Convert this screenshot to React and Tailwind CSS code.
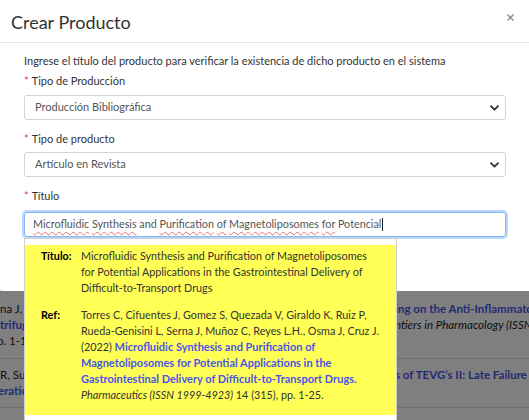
import React from 'react';

const Caret = () => (
  <svg width="9" height="6" viewBox="0 0 9 6" fill="none">
    <path d="M1 1.2 L4.5 4.7 L8 1.2" stroke="#333" strokeWidth="1.8" strokeLinecap="round" strokeLinejoin="round" />
  </svg>
);

const Label = ({ children, className = '' }) => (
  <div className={`leading-4 text-[#333] ${className}`}>
    <span className="mr-[3px] text-[#e04040]">*</span>
    {children}
  </div>
);

const Select = ({ value, className = '' }) => (
  <div className={`flex h-[25px] items-center justify-between rounded-[3px] border border-[#ced4da] pl-[10px] pr-[6px] text-[#555] ${className}`}>
    <span>{value}</span>
    <Caret />
  </div>
);

const Typo = ({ children }) => (
  <span className="underline decoration-[#e87070] decoration-wavy decoration-1 underline-offset-[3px]">{children}</span>
);

const BgLine = ({ left, right }) => (
  <div className="flex h-4 items-center whitespace-nowrap leading-4">
    <span className="w-[395px] shrink-0 overflow-hidden">{left}</span>
    <span>{right}</span>
  </div>
);

export default function App() {
  return (
    <div className="relative h-[420px] w-[529px] overflow-hidden bg-white font-['Lato',sans-serif] text-[11px]">
      {/* page behind the modal */}
      <div className="pt-[301px] text-[11.5px] text-[#222]">
        <div className="border-b border-[#dcdcdc] pb-[9px]">
          <BgLine left={<span>na J, Espinosa M, Rodríguez J</span>} right={<b className="text-[#4a55e8]">ing on the Anti-Inflammatory Effects of</b>} />
          <BgLine left={<b className="text-[#4a55e8]">trifugation and purification</b>} right={<i>ntiers in Pharmacology (ISSN 1663-9812)</i>} />
          <BgLine left={<span className="ml-[-3px]">p. 1-16.</span>} />
        </div>
        <div className="border-b border-[#dcdcdc] pb-[8px] pt-[8px]">
          <BgLine left={<span>R, Suárez C, Briceño J</span>} right={<b className="text-[#4a55e8]">s of TEVG’s II: Late Failure and</b>} />
          <BgLine left={<b className="ml-[-2px] text-[#4a55e8]">eration of vascular</b>} />
        </div>
      </div>
      <div className="absolute inset-0 bg-black/50" />

      {/* modal */}
      <div className="absolute left-[-3px] top-[-6px] h-[297px] w-[545px] rounded-[5px] bg-white">
        <div className="flex h-[49px] items-center justify-between border-b border-[#e5e5e5] px-[14px]">
          <h4 className="mt-[7px] text-[18px] leading-6 text-[#333]">Crear Producto</h4>
          <button className="mb-[2px] mr-[13px] flex h-[10px] w-[10px] items-center justify-center">
            <svg width="7" height="7" viewBox="0 0 7 7">
              <path d="M0.5 0.5 L6.5 6.5 M6.5 0.5 L0.5 6.5" stroke="#8a8a8a" strokeWidth="1.4" />
            </svg>
          </button>
        </div>

        <div className="px-[27px] pt-[10px]">
          <p className="leading-4 text-[#333]">
            Ingrese el título del producto para verificar la existencia de dicho producto en el sistema
          </p>
          <Label className="mt-[4px]">Tipo de Producción</Label>
          <Select className="mt-[6px] w-[482px]" value="Producción Bibliográfica" />
          <Label className="mt-[11px]">Tipo de producto</Label>
          <Select className="mt-[5px] w-[482px]" value="Artículo en Revista" />
          <Label className="mt-[11px]">Título</Label>

          <div className="relative mt-[8px] w-[482px]">
            <div className="flex h-[25px] items-center rounded-[3px] border border-[#80b5f5] pl-[8px] text-[10.8px] text-[#555] shadow-[0_0_0_2px_rgba(64,140,245,0.35)]">
              <span className="whitespace-nowrap">
                <Typo>Microfluidic</Typo> <Typo>Synthesis</Typo> and <Typo>Purification</Typo> <Typo>of</Typo>{' '}
                <Typo>Magnetoliposomes</Typo> <Typo>for</Typo> Potencial{' '}
              </span>
              <span className="ml-[1px] h-[13px] w-px bg-[#222]" />
            </div>

            {/* autocomplete suggestion */}
            <div className="absolute left-0 top-[calc(100%+1px)] w-[373px] border border-[#d0d0d0] bg-white pb-[10px] pt-[6px]">
              <div className="bg-[#ffff55] pb-[12px] pl-[16px] pt-[3px] text-[10.8px] leading-4 text-[#333]">
                <div className="flex">
                  <b className="w-[40px] shrink-0 text-black">Título:</b>
                  <div className="whitespace-nowrap">
                    Microfluidic Synthesis and Purification of Magnetoliposomes
                    <br />
                    for Potential Applications in the Gastrointestinal Delivery of
                    <br />
                    Difficult-to-Transport Drugs
                  </div>
                </div>
                <div className="mt-[11px] flex">
                  <b className="w-[40px] shrink-0 text-black">Ref:</b>
                  <div className="whitespace-nowrap">
                    Torres C, Cifuentes J, Gomez S, Quezada V, Giraldo K, Ruiz P,
                    <br />
                    Rueda-Genisini L, Serna J, Muñoz C, Reyes L.H., Osma J, Cruz J.
                    <br />
                    (2022){' '}
                    <b className="text-[11px] text-[#4a55e8]">
                      Microfluidic Synthesis and Purification of
                      <br />
                      Magnetoliposomes for Potential Applications in the
                      <br />
                      Gastrointestinal Delivery of Difficult-to-Transport Drugs.
                    </b>
                    <br />
                    <i>Pharmaceutics (ISSN 1999-4923)</i> 14 (315), pp. 1-25.
                  </div>
                </div>
              </div>
            </div>
          </div>
        </div>
      </div>
    </div>
  );
}
